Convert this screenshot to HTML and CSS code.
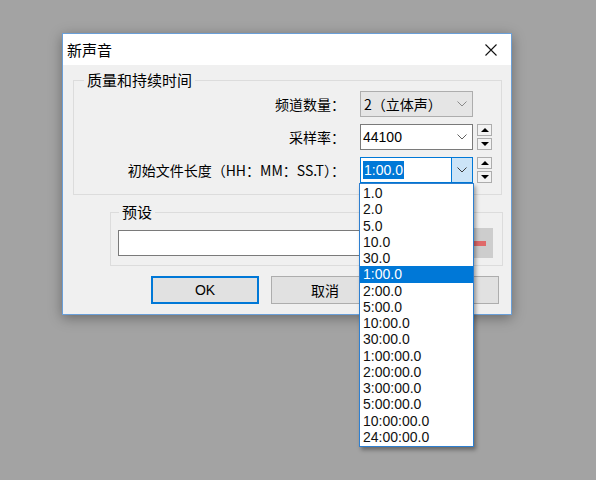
FILE: index.html
```html
<!DOCTYPE html>
<html lang="zh-CN">
<head>
    <meta charset="UTF-8">
    <title>新声音</title>
    <link rel="stylesheet" href="styles.css">
</head>
<body>

    <!-- New sound dialog -->
    <div class="window">
        <div class="titlebar">
            <span class="title">新声音</span>
            <svg class="close" width="12" height="12" viewBox="0 0 12 12">
                <path d="M0.5 0.5 L11.5 11.5 M11.5 0.5 L0.5 11.5" stroke="#111" stroke-width="1.1" fill="none"/>
            </svg>
        </div>

        <div class="dialog-body">
            <!-- Quality and duration -->
            <fieldset class="group quality">
                <legend>质量和持续时间</legend>

                <div class="form-grid">
                    <label class="field-label">频道数量：</label>
                    <div class="combo combo-locked">
                        <span class="combo-text">2（立体声）</span>
                        <svg class="chevron" width="10" height="6" viewBox="0 0 10 6">
                            <polyline points="0.5,0.5 5,5 9.5,0.5" stroke="#8a8a8a" fill="none"/>
                        </svg>
                    </div>
                    <div></div>

                    <label class="field-label">采样率：</label>
                    <div class="combo">
                        <span class="combo-text">44100</span>
                        <svg class="chevron" width="10" height="6" viewBox="0 0 10 6">
                            <polyline points="0.5,0.5 5,5 9.5,0.5" stroke="#606060" fill="none"/>
                        </svg>
                    </div>
                    <div class="spinner">
                        <span class="spin"><i class="tri-up"></i></span>
                        <span class="spin"><i class="tri-down"></i></span>
                    </div>

                    <label class="field-label">初始文件长度（HH：MM：SS.T）：</label>
                    <div class="combo combo-open">
                        <span class="combo-text"><span class="text-selected">1:00.0</span></span>
                        <span class="drop-btn">
                            <svg width="10" height="6" viewBox="0 0 10 6">
                                <polyline points="0.5,0.5 5,5 9.5,0.5" stroke="#3c3c3c" fill="none"/>
                            </svg>
                        </span>

                        <!-- open drop-down list -->
                        <ul class="drop-list">
                            <li>1.0</li>
                            <li>2.0</li>
                            <li>5.0</li>
                            <li>10.0</li>
                            <li>30.0</li>
                            <li class="active">1:00.0</li>
                            <li>2:00.0</li>
                            <li>5:00.0</li>
                            <li>10:00.0</li>
                            <li>30:00.0</li>
                            <li>1:00:00.0</li>
                            <li>2:00:00.0</li>
                            <li>3:00:00.0</li>
                            <li>5:00:00.0</li>
                            <li>10:00:00.0</li>
                            <li>24:00:00.0</li>
                        </ul>
                    </div>
                    <div class="spinner">
                        <span class="spin"><i class="tri-up"></i></span>
                        <span class="spin"><i class="tri-down"></i></span>
                    </div>
                </div>
            </fieldset>

            <!-- Presets -->
            <fieldset class="group preset">
                <legend>预设</legend>
                <div class="preset-row">
                    <div class="preset-input"></div>
                    <span class="icon-btn"></span>
                    <span class="icon-btn"><i class="dash"></i></span>
                </div>
            </fieldset>

            <div class="actions">
                <button class="btn btn-default">OK</button>
                <button class="btn">取消</button>
                <button class="btn">帮助</button>
            </div>
        </div>
    </div>

</body>
</html>
```

FILE: styles.css
```css
body {
    margin: 0;
    width: 596px;
    height: 480px;
    overflow: hidden;
    background-color: #a3a3a3;
    font-family: "Liberation Sans", "Noto Sans CJK SC", sans-serif;
    color: #000;
    position: relative;
}

.window {
    position: absolute;
    left: 62px;
    top: 33px;
    width: 450px;
    box-sizing: border-box;
    border: 1px solid #6a9fd8;
    background-color: #f0f0f0;
    box-shadow: 0 3px 12px rgba(0, 0, 0, 0.35);
}

.titlebar {
    height: 31px;
    background-color: #fff;
    display: flex;
    align-items: center;
    justify-content: space-between;
    padding-left: 4px;
}

.title {
    font-family: "Noto Sans CJK SC", sans-serif;
    font-size: 15px;
}

.close {
    margin-right: 14px;
}

.dialog-body {
    padding: 5px 0 10px 0;
}

.group {
    margin: 0;
    min-width: 0;
    border: 1px solid #dcdcdc;
}

.group legend {
    font-family: "Noto Sans CJK SC", sans-serif;
    font-size: 15px;
    line-height: 20px;
    padding: 0 3px;
}

.quality {
    margin: 0 9px 0 10px;
    padding: 1px 9px 11px 8px;
}

.quality legend {
    margin-left: 2px;
}

.form-grid {
    display: grid;
    grid-template-columns: 1fr 113px 15px;
    grid-auto-rows: 26px;
    column-gap: 4px;
    row-gap: 7px;
    align-items: center;
}

.field-label {
    text-align: right;
    padding-right: 11px;
    font-size: 14px;
    font-family: "Noto Sans CJK SC", sans-serif;
}

.combo {
    height: 26px;
    box-sizing: border-box;
    border: 1px solid #7a7a7a;
    background-color: #fff;
    display: flex;
    align-items: center;
    position: relative;
    font-size: 14px;
}

.combo-text {
    flex: 1;
    padding-left: 2px;
    white-space: nowrap;
}

.chevron {
    margin-right: 5px;
}

.combo-locked {
    background-color: #e5e5e5;
    border-color: #adadad;
}

.combo-locked .combo-text {
    font-family: "Noto Sans CJK SC", sans-serif;
    font-size: 14px;
    padding-left: 3px;
}

.combo-open {
    border-color: #0078d7;
}

.text-selected {
    background-color: #0078d7;
    color: #fff;
    padding: 1px 1px;
}

.drop-btn {
    width: 20px;
    align-self: stretch;
    background-color: #cce4f7;
    border-left: 1px solid #0078d7;
    display: flex;
    align-items: center;
    justify-content: center;
}

.drop-list {
    position: absolute;
    top: calc(100% + 1px);
    left: -2px;
    width: 115px;
    box-sizing: border-box;
    margin: 0;
    padding: 1px 0;
    list-style: none;
    background-color: #fff;
    border: 1px solid #2e7fd0;
    box-shadow: 2px 3px 4px rgba(0, 0, 0, 0.35);
    z-index: 2;
}

.drop-list li {
    height: 16.25px;
    line-height: 16px;
    padding-left: 3px;
    font-size: 14px;
    color: #111;
}

.drop-list li.active {
    background-color: #0078d7;
    color: #fff;
}

.spinner {
    display: flex;
    flex-direction: column;
    gap: 2px;
}

.spin {
    height: 12px;
    box-sizing: border-box;
    border: 1px solid #adadad;
    background-color: #f3f3f3;
    display: flex;
    align-items: center;
    justify-content: center;
}

.tri-up {
    width: 0;
    height: 0;
    border-left: 4px solid transparent;
    border-right: 4px solid transparent;
    border-bottom: 4px solid #000;
}

.tri-down {
    width: 0;
    height: 0;
    border-left: 4px solid transparent;
    border-right: 4px solid transparent;
    border-top: 4px solid #000;
}

.preset {
    margin: 7px 8px 0 47px;
    padding: 6px 9px 7px 7px;
}

.preset legend {
    margin-left: 1px;
}

.preset-row {
    height: 30px;
    display: flex;
    align-items: center;
    gap: 2px;
}

.preset-input {
    flex: 1;
    height: 26px;
    box-sizing: border-box;
    border: 1px solid #7a7a7a;
    background-color: #fff;
    margin-right: 2px;
}

.icon-btn {
    width: 30px;
    height: 30px;
    background-color: #cdcdcd;
    display: flex;
    align-items: center;
    justify-content: center;
}

.dash {
    width: 15px;
    height: 5px;
    background-color: #e06a6a;
}

.actions {
    margin-top: 10px;
    padding-left: 88px;
    display: flex;
    gap: 12px;
}

.btn {
    width: 108px;
    height: 28px;
    box-sizing: border-box;
    border: 1px solid #adadad;
    background-color: #e1e1e1;
    font-family: "Liberation Sans", "Noto Sans CJK SC", sans-serif;
    font-size: 14px;
    color: #000;
    padding: 0;
}

.btn-default {
    border: 2px solid #0078d7;
}
```
